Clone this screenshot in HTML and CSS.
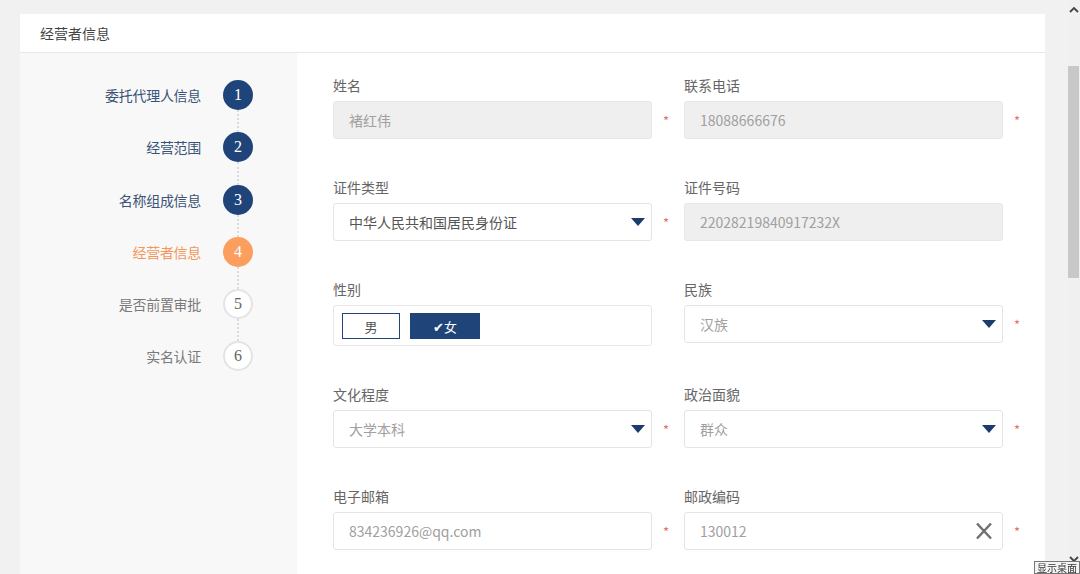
FILE: index.html
```html
<!DOCTYPE html>
<html lang="zh-CN">
<head>
<meta charset="utf-8">
<title>经营者信息</title>
<link rel="stylesheet" href="styles.css">
</head>
<body>
<div class="page">
  <div class="card">
    <div class="card-header">经营者信息</div>
    <div class="card-body">
      <aside class="steps">
        <div class="step done"><span class="step-label">委托代理人信息</span><span class="circle">1</span></div>
        <div class="connector"></div>
        <div class="step done"><span class="step-label">经营范围</span><span class="circle">2</span></div>
        <div class="connector"></div>
        <div class="step done"><span class="step-label">名称组成信息</span><span class="circle">3</span></div>
        <div class="connector"></div>
        <div class="step current"><span class="step-label">经营者信息</span><span class="circle">4</span></div>
        <div class="connector"></div>
        <div class="step todo"><span class="step-label">是否前置审批</span><span class="circle">5</span></div>
        <div class="connector"></div>
        <div class="step todo"><span class="step-label">实名认证</span><span class="circle">6</span></div>
      </aside>
      <main class="form">
        <div class="field">
          <div class="label">姓名</div>
          <div class="control">
            <div class="input disabled">褚红伟</div><span class="req">*</span>
          </div>
        </div>
        <div class="field">
          <div class="label">联系电话</div>
          <div class="control">
            <div class="input disabled">18088666676</div><span class="req">*</span>
          </div>
        </div>
        <div class="field">
          <div class="label">证件类型</div>
          <div class="control">
            <div class="input select dark">中华人民共和国居民身份证<span class="caret"></span></div><span class="req">*</span>
          </div>
        </div>
        <div class="field">
          <div class="label">证件号码</div>
          <div class="control">
            <div class="input disabled">22028219840917232X</div>
          </div>
        </div>
        <div class="field">
          <div class="label">性别</div>
          <div class="control">
            <div class="gender">
              <span class="gbtn">男</span>
              <span class="gbtn active">✔女</span>
            </div>
          </div>
        </div>
        <div class="field">
          <div class="label">民族</div>
          <div class="control">
            <div class="input select">汉族<span class="caret"></span></div><span class="req">*</span>
          </div>
        </div>
        <div class="field">
          <div class="label">文化程度</div>
          <div class="control">
            <div class="input select">大学本科<span class="caret"></span></div><span class="req">*</span>
          </div>
        </div>
        <div class="field">
          <div class="label">政治面貌</div>
          <div class="control">
            <div class="input select">群众<span class="caret"></span></div><span class="req">*</span>
          </div>
        </div>
        <div class="field">
          <div class="label">电子邮箱</div>
          <div class="control">
            <div class="input">834236926@qq.com</div><span class="req">*</span>
          </div>
        </div>
        <div class="field">
          <div class="label">邮政编码</div>
          <div class="control">
            <div class="input select">130012
              <svg class="clear" width="18" height="16" viewBox="0 0 18 16"><path d="M2 0.5 L16 15.5 M16 0.5 L2 15.5" stroke="#707070" stroke-width="2.4" fill="none"/></svg>
            </div><span class="req">*</span>
          </div>
        </div>
      </main>
    </div>
  </div>
</div>
<div class="scrollbar">
  <svg class="sb-up" width="10" height="7" viewBox="0 0 10 7"><path d="M1 6 L5 2 L9 6" stroke="#444" stroke-width="1.8" fill="none"/></svg>
  <div class="sb-thumb"></div>
  <svg class="sb-down" width="10" height="7" viewBox="0 0 10 7"><path d="M1 1 L5 5 L9 1" stroke="#444" stroke-width="1.8" fill="none"/></svg>
</div>
<div class="tooltip">显示桌面</div>
</body>
</html>
```
FILE: styles.css
```css
html, body {
  margin: 0;
  padding: 0;
  height: 100%;
  overflow: hidden;
}
body {
  background: #f1f1f1;
  font-family: "Noto Sans CJK SC", "Noto Sans", sans-serif;
  font-size: 14px;
  color: #555;
}
.page {
  padding: 14px 0 0 20px;
}
.card {
  width: 1025px;
  background: #fff;
  height: 560px;
  display: flex;
  flex-direction: column;
}
.card-header {
  height: 38px;
  line-height: 38px;
  padding-left: 20px;
  border-bottom: 1px solid #e8e8e8;
  color: #444;
  font-size: 14px;
}
.card-body {
  display: flex;
  flex: 1;
}
.steps {
  width: 277px;
  background: #f8f8f8;
  padding-top: 27px;
  box-sizing: border-box;
}
.step {
  display: flex;
  align-items: center;
  justify-content: flex-end;
  padding-right: 44px;
  gap: 22px;
  height: 30px;
}
.step-label {
  font-size: 14px;
  line-height: 20px;
  letter-spacing: -0.3px;
}
.circle {
  width: 30px;
  height: 30px;
  border-radius: 50%;
  box-sizing: border-box;
  display: flex;
  align-items: center;
  justify-content: center;
  font-family: "Liberation Serif", serif;
  font-size: 16px;
  color: #fff;
}
.step.done .step-label { color: #3a5377; }
.step.done .circle { background: #1f4479; }
.step.current .step-label { color: #f5975a; }
.step.current .circle { background: #fb9e5e; }
.step.todo .step-label { color: #7a7a7a; }
.step.todo .circle {
  background: #fff;
  border: 2px solid #e4e4e4;
  color: #666;
}
.connector {
  height: 22.3px;
  margin-left: 217px;
  border-left: 2px dotted #dcdcdc;
}
.form {
  flex: 1;
  padding: 22px 0 0 36px;
  display: grid;
  grid-template-columns: 351px 351px;
  row-gap: 38px;
  align-content: start;
}
.label {
  line-height: 20px;
  margin-bottom: 6px;
  color: #666;
}
.control {
  display: flex;
  align-items: center;
  gap: 11px;
}
.input {
  width: 319px;
  height: 38px;
  box-sizing: border-box;
  border: 1px solid #e4e4e4;
  border-radius: 3px;
  padding: 0 15px;
  display: flex;
  align-items: center;
  color: #a0a0a0;
  background: #fff;
  position: relative;
}
.input.disabled {
  background: #efefef;
  border-color: #e8e8e8;
}
.input.dark { color: #555; }
.caret {
  position: absolute;
  right: 6px;
  top: 50%;
  margin-top: -4px;
  width: 0;
  height: 0;
  border-left: 7px solid transparent;
  border-right: 7px solid transparent;
  border-top: 8px solid #1c3c6c;
}
.clear {
  position: absolute;
  right: 9px;
  top: 50%;
  margin-top: -8px;
}
.req {
  color: #e47070;
  font-size: 13px;
  line-height: 13px;
}
.gender {
  width: 319px;
  height: 41px;
  box-sizing: border-box;
  border: 1px solid #e6e6e6;
  border-radius: 3px;
  padding: 7px 0 0 8px;
  display: flex;
  gap: 10px;
  align-items: flex-start;
}
.gbtn {
  height: 26px;
  box-sizing: border-box;
  border: 1px solid #1f4479;
  display: flex;
  align-items: center;
  justify-content: center;
  font-size: 13px;
  color: #555;
  width: 58px;
}
.gbtn.active {
  width: 70px;
  background: #1f4479;
  color: #fff;
}
.scrollbar {
  position: fixed;
  top: 0;
  right: 0;
  width: 12px;
  height: 574px;
  background: #f0f0f0;
}
.sb-up {
  position: absolute;
  top: 6px;
  left: 1px;
}
.sb-down {
  position: absolute;
  top: 556px;
  left: 1px;
}
.sb-thumb {
  position: absolute;
  top: 66px;
  left: 0;
  width: 11px;
  height: 212px;
  background: #c8c8c8;
}
.tooltip {
  position: fixed;
  left: 1034px;
  top: 561px;
  padding: 0 2px;
  height: 13px;
  line-height: 11px;
  font-size: 10px;
  white-space: nowrap;
  color: #333;
  background: #f4f4f4;
  border: 1px solid #777;
  box-sizing: border-box;
}
```
